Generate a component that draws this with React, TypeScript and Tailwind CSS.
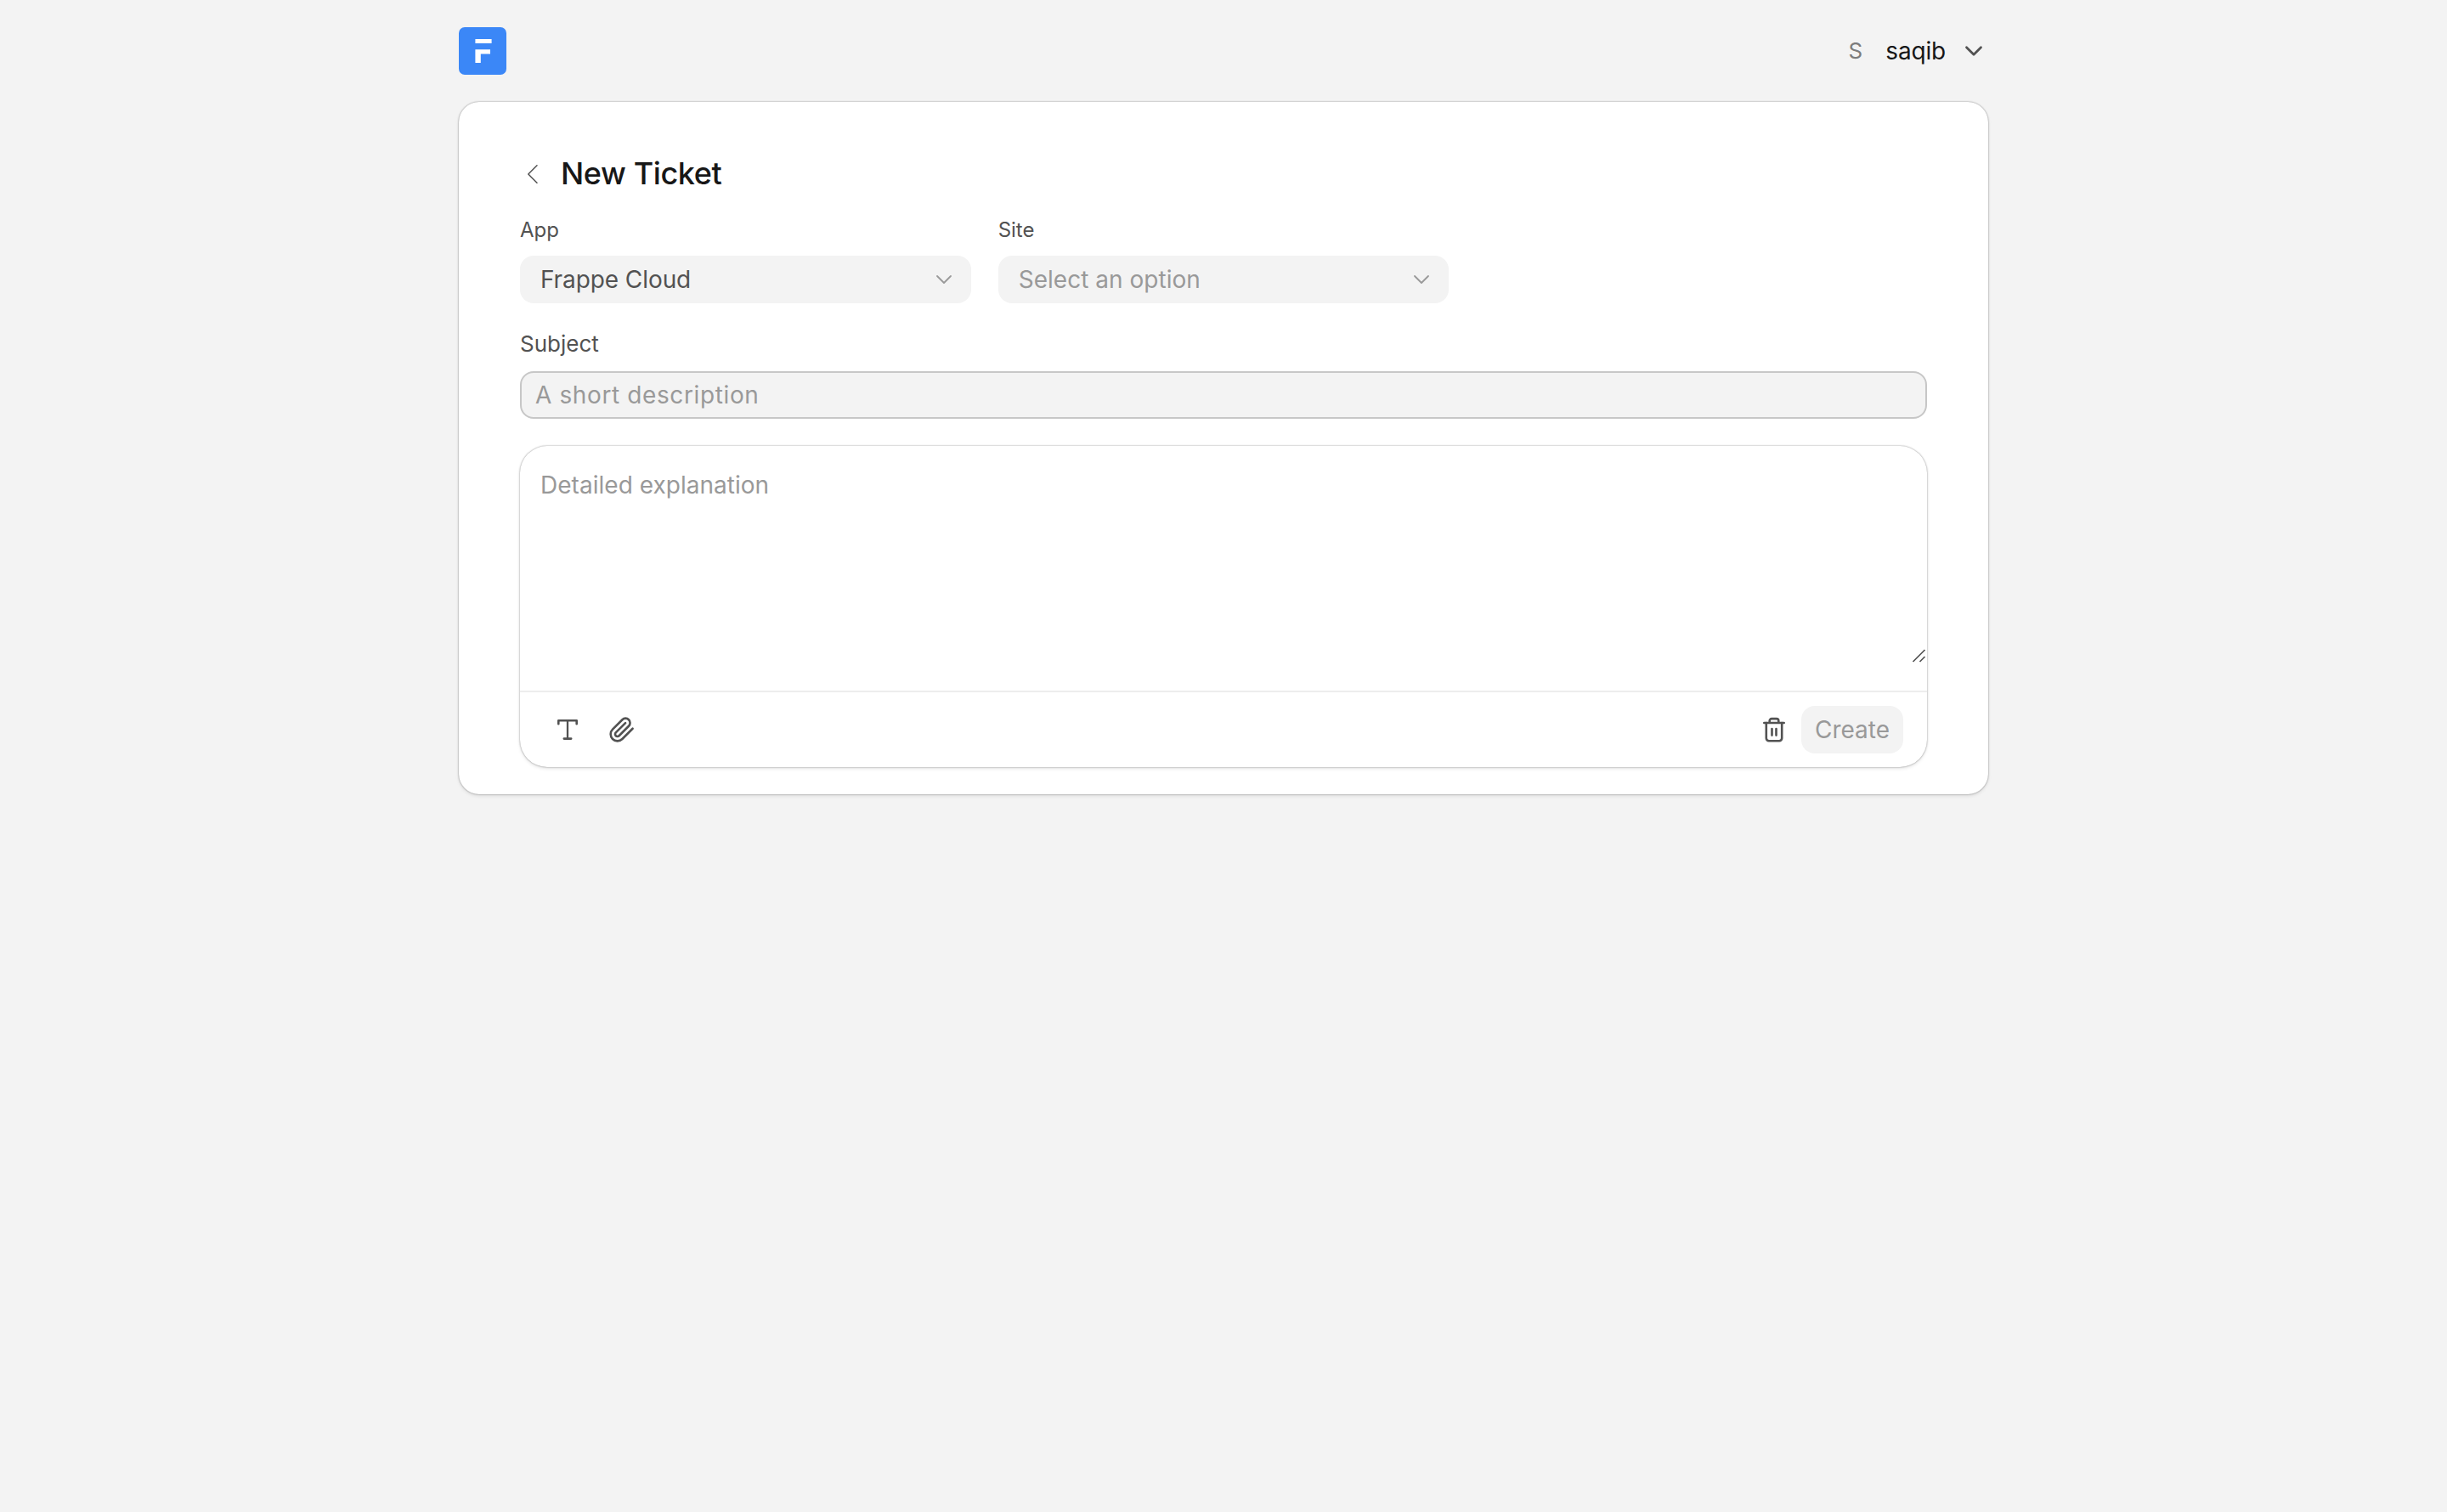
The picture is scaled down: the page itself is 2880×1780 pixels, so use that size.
import type { ReactNode } from 'react'

interface SelectFieldProps {
  label: string
  value: string
  placeholder?: boolean
}

function Logo() {
  return (
    <svg className="size-14" viewBox="0 0 56 56" fill="none">
      <rect width="56" height="56" rx="7" fill="#3b87f7" />
      <path d="M19.4 14h19.2v5H19.4z" fill="white" />
      <path d="M19.4 26.2H37v5.4H25.8V42h-6.4z" fill="white" />
    </svg>
  )
}

function ChevronDown({ className }: { className: string }) {
  return (
    <svg className={className} viewBox="0 0 32 32" fill="none" stroke="currentColor" strokeLinecap="round" strokeLinejoin="round">
      <path d="m8 12 8 8 8-8" />
    </svg>
  )
}

function BackIcon() {
  return (
    <svg className="size-8 text-[#525252]" viewBox="0 0 32 32" fill="none" stroke="currentColor" strokeWidth="1.5" strokeLinecap="round" strokeLinejoin="round">
      <path d="M20 6.8 9.8 17 20 27.2" />
    </svg>
  )
}

function TextIcon() {
  return (
    <svg className="size-8" viewBox="0 0 32 32" fill="none" stroke="currentColor" strokeWidth="2.6" strokeLinecap="round" strokeLinejoin="round">
      <path d="M5.3 9.2V5.3h21.4v3.9M11.8 26.6h8.4" />
      <path d="M16 5.3v21.3" strokeWidth="2.3" />
    </svg>
  )
}

function AttachmentIcon() {
  return (
    <svg className="size-8" viewBox="0 0 24 24" fill="none" stroke="currentColor" strokeWidth="1.95" strokeLinecap="round" strokeLinejoin="round">
      <path d="m21.44 11.05-9.19 9.19a6 6 0 0 1-8.49-8.49l8.57-8.57A4 4 0 1 1 18 8.84l-8.59 8.57a2 2 0 0 1-2.83-2.83l8.49-8.48" />
    </svg>
  )
}

function TrashIcon() {
  return (
    <svg className="size-8" viewBox="0 0 32 32" fill="none" stroke="currentColor" strokeWidth="2.6" strokeLinecap="round" strokeLinejoin="round">
      <path d="M4.3 8h23.4M10.7 7.6V5.5a2.4 2.4 0 0 1 2.4-2.4h5.8a2.4 2.4 0 0 1 2.4 2.4v2.1" />
      <path d="M6.8 8v18.1a3.1 3.1 0 0 0 3.1 3.1h12.2a3.1 3.1 0 0 0 3.1-3.1V8M13.5 15v7.6M18.5 15v7.6" />
    </svg>
  )
}

function ResizeHandle() {
  return (
    <svg className="absolute right-0 bottom-0 size-[18px] text-[#525252]" viewBox="0 0 18 18" fill="none" stroke="currentColor" strokeWidth="1.7">
      <path d="M1.5 16l14-14M9.5 16l6-6" />
    </svg>
  )
}

function SelectField({ label, value, placeholder }: SelectFieldProps) {
  return (
    <div>
      <div className="mb-4 text-[24px] leading-7 text-[#525252]">{label}</div>
      <button className="flex h-14 w-full items-center justify-between rounded-2xl bg-[#f3f3f3] pr-4 pl-6 text-[28px]">
        <span className={placeholder ? 'tracking-[0.001em] text-[#999999]' : 'tracking-[-0.003em] text-[#525252]'}>
          {value}
        </span>
        <ChevronDown className="size-8 text-[#999999] [stroke-width:1.8]" />
      </button>
    </div>
  )
}

function IconButton({ children }: { children: ReactNode }) {
  return (
    <button className="flex size-14 items-center justify-center rounded-2xl text-[#525252]">
      {children}
    </button>
  )
}

export default function App() {
  return (
    <div className="min-h-[1780px] bg-[#f3f3f3] font-['Inter',sans-serif] font-normal">
      <div className="mx-auto w-[1800px]">
        {/* Header */}
        <header className="flex h-[120px] items-center justify-between">
          <Logo />
          <button className="flex items-center">
            <span className="mr-[27px] text-[26px] leading-8 text-[#7c7c7c]">S</span>
            <span className="mr-4 text-[28px] leading-8 tracking-[-0.006em] text-[#171717]">saqib</span>
            <ChevronDown className="size-[34px] text-[#525252] [stroke-width:2.6]" />
          </button>
        </header>

        {/* Ticket form */}
        <main className="h-[815px] rounded-[24px] bg-white px-[72px] pt-16 shadow-[0_0_2px_rgba(0,0,0,0.45),0_2px_4px_rgba(0,0,0,0.1)]">
          <div className="mb-[33px] flex h-10 items-center gap-4">
            <BackIcon />
            <h1 className="text-[36px] leading-10 font-medium tracking-[-0.011em] text-[#171717]">New Ticket</h1>
          </div>

          <div className="grid grid-cols-3 gap-8">
            <SelectField label="App" value="Frappe Cloud" />
            <SelectField label="Site" value="Select an option" placeholder />
          </div>

          <label className="mt-8 block">
            <span className="mb-4 block text-[26px] leading-8 text-[#525252]">Subject</span>
            <input
              className="block h-14 w-full rounded-2xl border-2 border-[#c7c7c7] bg-[#f3f3f3] px-4 text-[28px] tracking-[0.022em] placeholder:text-[#999999]"
              placeholder="A short description"
            />
          </label>

          <div className="mt-8 flex h-[378px] flex-col rounded-[32px] shadow-[0_0_2px_rgba(0,0,0,0.45),0_2px_4px_rgba(0,0,0,0.1)]">
            <div className="relative h-64 px-6 pt-[30px] text-[28px] leading-8 tracking-[0.001em] text-[#999999]">
              Detailed explanation
              <ResizeHandle />
            </div>
            <div className="mt-8 flex h-[90px] items-center justify-between border-t-2 border-[#ededed] pr-7 pl-7">
              <div className="flex items-center gap-2">
                <IconButton>
                  <TextIcon />
                </IconButton>
                <IconButton>
                  <AttachmentIcon />
                </IconButton>
              </div>
              <div className="flex items-center gap-1">
                <IconButton>
                  <TrashIcon />
                </IconButton>
                <button className="h-14 w-[120px] rounded-2xl bg-[#f3f3f3] text-center text-[28px] text-[#999999]">
                  Create
                </button>
              </div>
            </div>
          </div>
        </main>
      </div>
    </div>
  )
}
